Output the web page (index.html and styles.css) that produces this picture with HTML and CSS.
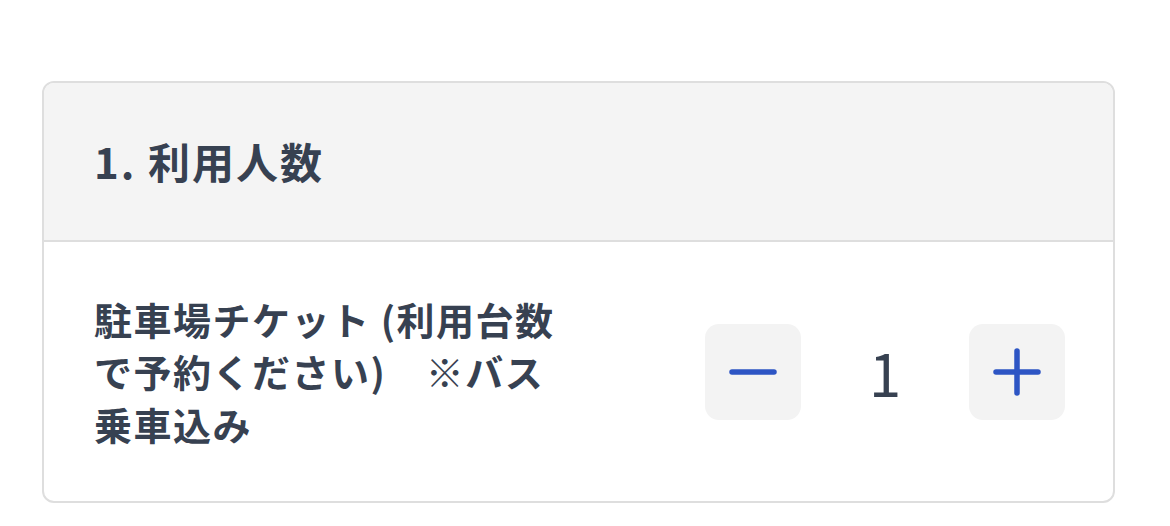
FILE: index.html
```html
<!DOCTYPE html>
<html lang="ja">
<head>
  <meta charset="UTF-8">
  <meta name="viewport" content="width=device-width, initial-scale=1.0">
  <title>利用人数</title>
  <link rel="stylesheet" href="styles.css">
</head>
<body>
  <div class="page">
    <section class="card">
      <div class="card-header">
        <h2>1. 利用人数</h2>
      </div>
      <div class="card-body">
        <p class="item-label">駐車場チケット (利用台数で予約ください)　※バス乗車込み</p>
        <div class="stepper">
          <button type="button" class="step-btn" aria-label="減らす">
            <svg width="48" height="48" viewBox="0 0 48 48">
              <line x1="3" y1="24" x2="45" y2="24" stroke="#2d55c4" stroke-width="5.5" stroke-linecap="round"/>
            </svg>
          </button>
          <span class="count">1</span>
          <button type="button" class="step-btn" aria-label="増やす">
            <svg width="48" height="48" viewBox="0 0 48 48">
              <line x1="3" y1="24" x2="45" y2="24" stroke="#2d55c4" stroke-width="5.5" stroke-linecap="round"/>
              <line x1="24" y1="3" x2="24" y2="45" stroke="#2d55c4" stroke-width="5.5" stroke-linecap="round"/>
            </svg>
          </button>
        </div>
      </div>
    </section>
  </div>
</body>
</html>
```

FILE: styles.css
```css
body {
  margin: 0;
  background: #fff;
  font-family: "Noto Sans CJK JP", "Noto Sans", sans-serif;
  color: #374151;
}

.page {
  padding: 81px 55px 0 42px;
}

.card {
  border: 2px solid #dedede;
  border-radius: 12px;
  overflow: hidden;
}

.card-header {
  background: #f4f4f4;
  border-bottom: 2px solid #dedede;
  padding: 0 50px;
  height: 157px;
  display: flex;
  align-items: center;
}

.card-header h2 {
  margin: 0;
  font-size: 42px;
  font-weight: 700;
  letter-spacing: 2px;
  line-height: 1.4;
}

.card-body {
  display: flex;
  align-items: center;
  justify-content: space-between;
  padding: 0 48px 0 50px;
  height: 259px;
}

.item-label {
  margin: 0;
  width: 470px;
  font-size: 38px;
  font-weight: 700;
  letter-spacing: 1.5px;
  line-height: 1.38;
}

.stepper {
  display: flex;
  align-items: center;
}

.step-btn {
  width: 96px;
  height: 96px;
  border: none;
  border-radius: 14px;
  background: #f3f3f3;
  padding: 0;
  display: flex;
  align-items: center;
  justify-content: center;
  cursor: pointer;
}

.count {
  width: 168px;
  text-align: center;
  font-size: 58px;
  font-weight: 400;
  line-height: 1;
}
```
